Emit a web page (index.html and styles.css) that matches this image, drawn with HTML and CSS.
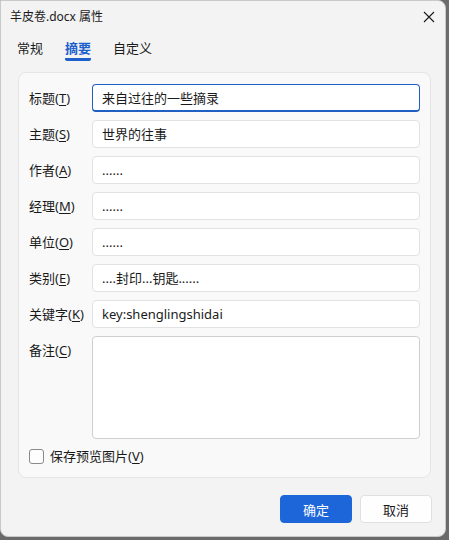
FILE: index.html
```html
<!DOCTYPE html>
<html lang="zh-cn">
<head>
    <meta charset="UTF-8">
    <title>羊皮卷.docx 属性</title>
    <link rel="stylesheet" href="styles.css">
</head>
<body>
    <div class="window">
        <div class="titlebar">
            <span class="title">羊皮卷.docx 属性</span>
            <svg class="close" width="12" height="12" viewBox="0 0 12 12">
                <path d="M1 1 L11 11 M11 1 L1 11" stroke="#1a1a1a" stroke-width="1.1" fill="none"/>
            </svg>
        </div>

        <div class="tabs">
            <span class="tab">常规</span>
            <span class="tab active">摘要</span>
            <span class="tab">自定义</span>
        </div>

        <div class="panel">
            <div class="row">
                <label>标题(<u>T</u>)</label>
                <div class="field focus">来自过往的一些摘录</div>
            </div>
            <div class="row">
                <label>主题(<u>S</u>)</label>
                <div class="field">世界的往事</div>
            </div>
            <div class="row">
                <label>作者(<u>A</u>)</label>
                <div class="field">......</div>
            </div>
            <div class="row">
                <label>经理(<u>M</u>)</label>
                <div class="field">......</div>
            </div>
            <div class="row">
                <label>单位(<u>O</u>)</label>
                <div class="field">......</div>
            </div>
            <div class="row">
                <label>类别(<u>E</u>)</label>
                <div class="field">....封印...钥匙......</div>
            </div>
            <div class="row">
                <label>关键字(<u>K</u>)</label>
                <div class="field">key:shenglingshidai</div>
            </div>
            <div class="row">
                <label>备注(<u>C</u>)</label>
                <div class="field area"></div>
            </div>
            <div class="check">
                <span class="box"></span>
                <span>保存预览图片(<u>V</u>)</span>
            </div>
        </div>

        <div class="buttons">
            <button class="btn primary">确定</button>
            <button class="btn">取消</button>
        </div>
    </div>
</body>
</html>
```

FILE: styles.css
```css
body {
    margin: 0;
    background-color: #6b6b6b;
    font-family: "Segoe UI", "Noto Sans", "Noto Sans CJK SC", sans-serif;
    font-size: 13px;
    color: #1a1a1a;
}

.window {
    width: 446px;
    height: 537px;
    background-color: #f3f3f3;
    border: 1px solid #c9c9c9;
    border-radius: 0 8px 8px 8px;
    box-sizing: border-box;
    display: flex;
    flex-direction: column;
}

.titlebar {
    height: 32px;
    display: flex;
    align-items: center;
    justify-content: space-between;
    padding: 0 9px 0 9px;
}

.title {
    font-size: 12px;
    line-height: 16px;
}

.close {
    margin-right: 1px;
}

.tabs {
    display: flex;
    gap: 22px;
    padding: 6px 0 0 16px;
    height: 32px;
    box-sizing: border-box;
}

.tab {
    font-size: 13px;
    line-height: 18px;
    height: 22px;
    box-sizing: border-box;
}

.tab.active {
    color: #1d5fcb;
    font-weight: bold;
    border-bottom: 3px solid #1d5fcb;
    border-bottom-left-radius: 2px;
    border-bottom-right-radius: 2px;
}

.panel {
    margin: 7px 14px 0 17px;
    height: 406px;
    background-color: #f9f9f9;
    border: 1px solid #e5e5e5;
    border-radius: 8px;
    box-sizing: border-box;
    padding: 11px 10px 0 10px;
}

.row {
    display: flex;
    align-items: flex-start;
    margin-bottom: 8px;
}

.row label {
    width: 63px;
    line-height: 28px;
    flex-shrink: 0;
}

u {
    text-decoration-thickness: 1px;
    text-underline-offset: 2px;
}

.field {
    width: 328px;
    height: 28px;
    background-color: #ffffff;
    border: 1px solid #e2e2e2;
    border-radius: 4px;
    box-sizing: border-box;
    padding: 0 9px;
    line-height: 26px;
    font-size: 13px;
}

.field.focus {
    border-color: #1f5fc4;
    border-width: 1px 1px 2px 1px;
}

.field.area {
    height: 103px;
    border-color: #cfcfcf;
}

.check {
    display: flex;
    align-items: center;
    gap: 6px;
    margin: 2px 0 0 0;
    line-height: 18px;
}

.box {
    width: 13px;
    height: 13px;
    border: 1px solid #8a8a8a;
    border-radius: 3px;
    background-color: #fdfdfd;
}

.buttons {
    display: flex;
    justify-content: flex-end;
    gap: 8px;
    padding: 17px 13px 0 0;
}

.btn {
    width: 72px;
    height: 28px;
    font-family: inherit;
    font-size: 13px;
    border: 1px solid #e0e0e0;
    border-radius: 4px;
    background-color: #fefefe;
    color: #1a1a1a;
}

.btn.primary {
    background-color: #1d66d9;
    border-color: #1d66d9;
    color: #ffffff;
}
```
